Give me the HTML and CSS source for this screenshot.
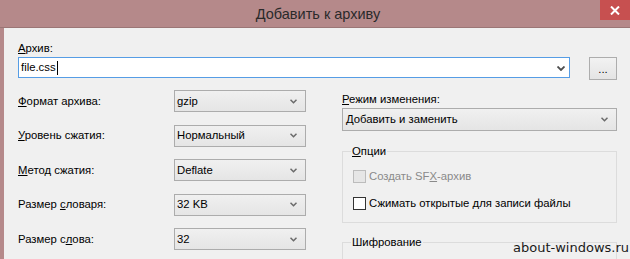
FILE: index.html
```html
<!DOCTYPE html>
<html lang="ru">
<head>
<meta charset="utf-8">
<title>Добавить к архиву</title>
<link rel="stylesheet" href="styles.css">
</head>
<body>
<div class="window">
  <div class="titlebar">
    <span class="title">Добавить к архиву</span>
    <div class="close">
      <svg width="10" height="9" viewBox="0 0 10 9"><path d="M1 0.5 L9 8.5 M9 0.5 L1 8.5" stroke="#fff" stroke-width="2"/></svg>
    </div>
  </div>
  <div class="client">
    <div class="archive">
      <div class="lbl"><u>А</u>рхив:</div>
      <div class="archive-row">
        <div class="edit-combo">
          <span class="edit-text">file.css</span><span class="caret"></span>
          <svg class="chev-dark" width="8" height="5" viewBox="0 0 8 5"><path d="M0.5 0.5 L4 4 L7.5 0.5" fill="none" stroke="#4d4d4d" stroke-width="1.8"/></svg>
        </div>
        <div class="browse">...</div>
      </div>
    </div>
    <div class="columns">
      <div class="left">
        <div class="row"><span class="lbl"><u>Ф</u>ормат архива:</span><div class="combo"><span>gzip</span><svg class="chev" width="7" height="5" viewBox="0 0 7 5"><path d="M0.5 0.7 L3.5 3.7 L6.5 0.7" fill="none" stroke="#6a6a6a" stroke-width="1.5"/></svg></div></div>
        <div class="row"><span class="lbl"><u>У</u>ровень сжатия:</span><div class="combo"><span>Нормальный</span><svg class="chev" width="7" height="5" viewBox="0 0 7 5"><path d="M0.5 0.7 L3.5 3.7 L6.5 0.7" fill="none" stroke="#6a6a6a" stroke-width="1.5"/></svg></div></div>
        <div class="row"><span class="lbl"><u>М</u>етод сжатия:</span><div class="combo"><span>Deflate</span><svg class="chev" width="7" height="5" viewBox="0 0 7 5"><path d="M0.5 0.7 L3.5 3.7 L6.5 0.7" fill="none" stroke="#6a6a6a" stroke-width="1.5"/></svg></div></div>
        <div class="row"><span class="lbl">Размер <u>с</u>ловаря:</span><div class="combo"><span>32 KB</span><svg class="chev" width="7" height="5" viewBox="0 0 7 5"><path d="M0.5 0.7 L3.5 3.7 L6.5 0.7" fill="none" stroke="#6a6a6a" stroke-width="1.5"/></svg></div></div>
        <div class="row"><span class="lbl">Размер с<u>л</u>ова:</span><div class="combo"><span>32</span><svg class="chev" width="7" height="5" viewBox="0 0 7 5"><path d="M0.5 0.7 L3.5 3.7 L6.5 0.7" fill="none" stroke="#6a6a6a" stroke-width="1.5"/></svg></div></div>
      </div>
      <div class="right">
        <div class="lbl mode-lbl"><u>Р</u>ежим изменения:</div>
        <div class="combo wide"><span>Добавить и заменить</span><svg class="chev" width="7" height="5" viewBox="0 0 7 5"><path d="M0.5 0.7 L3.5 3.7 L6.5 0.7" fill="none" stroke="#6a6a6a" stroke-width="1.5"/></svg></div>
        <fieldset class="group options">
          <legend><u>О</u>пции</legend>
          <div class="check disabled"><span class="box"></span><span>Создать SF<u>X</u>-архив</span></div>
          <div class="check"><span class="box"></span><span>Сжимать открытые для записи файлы</span></div>
        </fieldset>
        <fieldset class="group crypt">
          <legend>Шифрование</legend>
        </fieldset>
      </div>
    </div>
  </div>
  <div class="watermark">about-windows.ru</div>
</div>
</body>
</html>
```
FILE: styles.css
```css
html, body {
  margin: 0;
  padding: 0;
  width: 630px;
  height: 259px;
  overflow: hidden;
  background: #f0f0f0;
}
.window {
  position: relative;
  width: 630px;
  height: 259px;
  display: flex;
  flex-direction: column;
  font-family: "Liberation Sans", Arial, sans-serif;
  font-size: 11.3px;
  color: #000;
  overflow: hidden;
}
.titlebar {
  position: relative;
  flex: 0 0 auto;
  height: 27px;
  border-bottom: 1px solid #9b7676;
  background: #b5898a;
  display: flex;
  align-items: center;
  justify-content: center;
  padding-left: 6px;
}
.title {
  font-size: 14.5px;
  color: #2a2a2a;
  margin-top: 1px;
}
.close {
  position: absolute;
  right: 0;
  top: 0;
  width: 30px;
  height: 20px;
  background: #c75050;
  display: flex;
  align-items: center;
  justify-content: center;
}
.client {
  flex: 0 0 auto;
  border-left: 4px solid #b5898a;
  padding: 13px 13px 0 14px;
  background: #f0f0f0;
}
.lbl {
  line-height: 15px;
  white-space: nowrap;
}
u { text-decoration-thickness: 1px; text-underline-offset: 1px; }
.archive-row {
  display: flex;
  align-items: flex-start;
  gap: 19px;
  margin-top: 1px;
}
.edit-combo {
  flex: 1;
  height: 19px;
  border: 1px solid #569de5;
  background: #fff;
  display: flex;
  align-items: center;
  padding-left: 2px;
  position: relative;
}
.edit-text { line-height: 15px; }
.caret {
  width: 1px;
  height: 14px;
  background: #000;
  margin-left: 1px;
}
.chev-dark {
  margin-left: auto;
  margin-right: 4px;
  margin-top: 1px;
}
.browse {
  width: 26px;
  height: 21px;
  border: 1px solid #adadad;
  background: linear-gradient(#f2f2f2, #e4e4e4);
  display: flex;
  align-items: center;
  justify-content: center;
  line-height: 12px;
}
.columns {
  display: flex;
  margin-top: 10px;
  gap: 36px;
}
.left {
  width: 288px;
  flex: 0 0 288px;
  display: flex;
  flex-direction: column;
  gap: 12.5px;
}
.row {
  display: flex;
  align-items: center;
  justify-content: space-between;
  height: 22px;
}
.combo {
  box-sizing: border-box;
  width: 132px;
  height: 22px;
  border: 1px solid #acacac;
  background: linear-gradient(#f0f0f0, #e5e5e5);
  display: flex;
  align-items: center;
  padding: 0 8px 0 2px;
  justify-content: space-between;
  line-height: 15px;
}
.right {
  flex: 1;
  display: flex;
  flex-direction: column;
}
.mode-lbl { margin-top: 2px; }
.combo.wide {
  width: 100%;
  height: 23px;
  margin-top: 1px;
  padding-left: 3px;
}
.group {
  margin: 0;
  border: 1px solid #dcdcdc;
  padding: 0 8px 0 8px;
  min-width: 0;
}
.group legend {
  padding: 0 1px;
  line-height: 15px;
}
.options {
  margin-top: 12.5px;
  padding-bottom: 11px;
}
.check {
  display: flex;
  align-items: center;
  height: 15px;
  line-height: 15px;
  margin-left: 2px;
  gap: 3px;
}
.check + .check { margin-top: 12px; }
.options .check:first-of-type { margin-top: 10px; }
.box {
  box-sizing: border-box;
  width: 13px;
  height: 13px;
  border: 1px solid #333;
  background: #fff;
}
.check.disabled { color: #8a8a8a; }
.check.disabled .box {
  border-color: #bcbcbc;
  background: #e6e6e6;
}
.crypt {
  margin-top: 12.5px;
  height: 40px;
  border-bottom: none;
}
.watermark {
  position: absolute;
  left: 513px;
  top: 240px;
  font-family: "DejaVu Sans", Verdana, sans-serif;
  font-size: 13px;
  line-height: 16px;
  color: #1a1a1a;
}
```
